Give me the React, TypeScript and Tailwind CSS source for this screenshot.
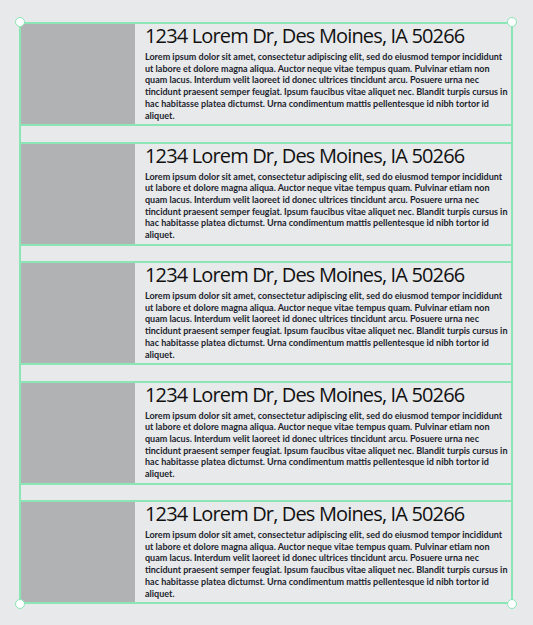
const BODY =
  "Lorem ipsum dolor sit amet, consectetur adipiscing elit, sed do eiusmod tempor incididunt ut labore et dolore magna aliqua. Auctor neque vitae tempus quam. Pulvinar etiam non quam lacus. Interdum velit laoreet id donec ultrices tincidunt arcu. Posuere urna nec tincidunt praesent semper feugiat. Ipsum faucibus vitae aliquet nec. Blandit turpis cursus in hac habitasse platea dictumst. Urna condimentum mattis pellentesque id nibh tortor id aliquet.";

const LISTINGS = [1, 2, 3, 4, 5].map(id => ({
  id,
  address: "1234 Lorem Dr, Des Moines, IA 50266",
  body: BODY,
}));

function Handle({ pos }: { pos: string }) {
  return (
    <span
      className={`absolute ${pos} w-[10px] h-[10px] rounded-full bg-white border-[1.5px] border-[#8ce5b5]`}
    />
  );
}

function Listing({ address, body }: { address: string; body: string }) {
  return (
    <div className="flex h-[104px] border-y-2 border-[#8ce5b5]">
      <div className="w-[114px] shrink-0 bg-[#b1b2b4]" />
      <div className="flex-1 min-w-0 pl-[10px] pr-[1px]">
        <h2 className="-mt-[2px] mb-[2px] font-['Open_Sans',sans-serif] text-[20px] leading-[27px] tracking-[-0.85px] text-[#111] whitespace-nowrap">
          {address}
        </h2>
        <p className="font-['Lato',sans-serif] font-bold text-[9px] leading-[11.7px] text-[#1c1f2e]">
          {body}
        </p>
      </div>
    </div>
  );
}

export default function App() {
  return (
    <div className="min-h-[625px] w-[533px] bg-[#e8e9eb] pt-[22px]">
      <div className="relative ml-[19px] w-[494px] border-x-2 border-[#8ce5b5] flex flex-col gap-[15.5px]">
        {LISTINGS.map(l => (
          <Listing key={l.id} address={l.address} body={l.body} />
        ))}
        <Handle pos="-left-[6px] -top-[5px]" />
        <Handle pos="-right-[6px] -top-[5px]" />
        <Handle pos="-left-[6px] -bottom-[5px]" />
        <Handle pos="-right-[6px] -bottom-[5px]" />
      </div>
    </div>
  );
}
